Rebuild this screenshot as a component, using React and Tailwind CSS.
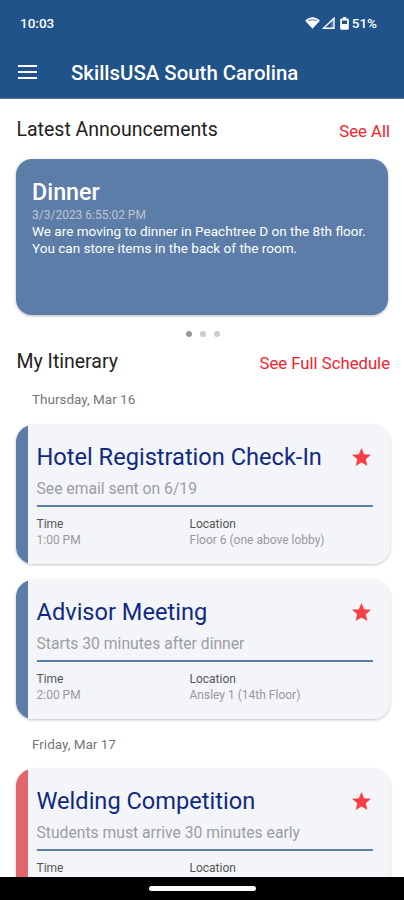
const days = [
  {
    label: 'Thursday, Mar 16',
    events: [
      { title: 'Hotel Registration Check-In', note: 'See email sent on 6/19', time: '1:00 PM', location: 'Floor 6 (one above lobby)', color: 'blue' },
      { title: 'Advisor Meeting', note: 'Starts 30 minutes after dinner', time: '2:00 PM', location: 'Ansley 1 (14th Floor)', color: 'blue' },
    ],
  },
  {
    label: 'Friday, Mar 17',
    events: [
      { title: 'Welding Competition', note: 'Students must arrive 30 minutes early', color: 'red' },
    ],
  },
]

function StatusBar() {
  return (
    <div className="h-[46px] pl-5 pr-[27px] flex items-center justify-between text-white font-medium text-[13.5px]">
      <span>10:03</span>
      <div className="flex items-center">
        <svg className="w-[15px] h-3" viewBox="0 0 15 12">
          <path d="M.2 3.800Q3.300.3 7.500.3T14.800 3.800L7.500 11.700Z" fill="#fff" />
          <path d="M3.200 3.600Q7.500 1.700 11.800 3.600" fill="none" stroke="#20538a" strokeWidth=".8" />
        </svg>
        <svg className="w-[13px] h-3 ml-0.5" viewBox="0 0 13 12">
          <path d="M1.500 11.200L12 1.200V11.200Z" fill="none" stroke="#fff" strokeWidth="1.400" />
          <path d="M9 4L12 1.200V11.200H9Z" fill="#fff" fillOpacity=".25" />
        </svg>
        <svg className="w-[9px] h-[13px] ml-[5px]" viewBox="0 0 9 13">
          <path d="M3 0h3v1.500h1.500q1.300 0 1.300 1.300v8.700q0 1.300-1.300 1.300h-6q-1.300 0-1.300-1.300V2.800q0-1.300 1.300-1.300H3Z" fill="#fff" />
          <path d="M2 3.500h5v3.500H2Z" fill="#20538a" />
        </svg>
        <span className="ml-[3px]">51%</span>
      </div>
    </div>
  )
}

function AppBar() {
  return (
    <div className="h-[53px] pl-[18px] flex items-center text-white">
      <button className="w-[19px] h-3.5 -mt-px flex flex-col justify-between" aria-label="Menu">
        <span className="w-full h-0.5 bg-white" />
        <span className="w-full h-0.5 bg-white" />
        <span className="w-full h-0.5 bg-white" />
      </button>
      <h1 className="ml-[34px] text-[20.4px] leading-6 font-medium whitespace-nowrap">SkillsUSA South Carolina</h1>
    </div>
  )
}

function SectionHeader({ title, action }) {
  return (
    <div className="flex justify-between pl-[16.5px] pr-3.5 h-7 leading-7 whitespace-nowrap">
      <h2 className="text-[19.5px] text-[#222]">{title}</h2>
      <button className="pt-0.5 text-[16.7px] text-[#f5222d]">{action}</button>
    </div>
  )
}

function Announcement() {
  return (
    <div className="mx-4 mt-[15px] h-[156px] rounded-2xl bg-[#5c7da8] px-4 pt-[19px] text-white shadow-[0_1px_3px_rgba(0,0,0,0.3)]">
      <h3 className="text-[23.3px] leading-7 font-medium">Dinner</h3>
      <p className="mt-0.5 text-[12px] leading-[14px] text-[#bfc5cd]">3/3/2023 6:55:02 PM</p>
      <p className="mt-px text-[13.55px] leading-[17px] whitespace-nowrap">
        We are moving to dinner in Peachtree D on the 8th floor.
        <br />
        You can store items in the back of the room.
      </p>
    </div>
  )
}

function Dots() {
  return (
    <div className="mt-4 pl-0.5 flex justify-center gap-2">
      <span className="w-1.5 h-1.5 rounded-full bg-[#999]" />
      <span className="w-1.5 h-1.5 rounded-full bg-[#ccc]" />
      <span className="w-1.5 h-1.5 rounded-full bg-[#ccc]" />
    </div>
  )
}

function Star() {
  return (
    <svg className="w-[19px] h-[18px]" viewBox="2 2 20 19" fill="#fb3f46">
      <path d="M12 17.270L18.180 21l-1.640-7.030L22 9.240l-7.190-.61L12 2 9.190 8.630 2 9.240l5.460 4.730L5.820 21z" />
    </svg>
  )
}

function EventCard({ e }) {
  const stripe = e.color === 'red' ? 'w-3 bg-[#e1666c]' : 'w-3 bg-[#5c7da8]'
  return (
    <div className="h-[139px] shrink-0 rounded-[17px] shadow-[0_1px_3px_rgba(0,0,0,0.25)]">
      <div className="h-full flex rounded-[17px] overflow-hidden bg-[#f3f5f9]">
        <div className={stripe} />
        <div className="flex-1 pl-[8.5px] pr-[17px] pt-4">
          <div className="flex justify-between items-center h-8 pr-0.5 whitespace-nowrap">
            <h3 className="text-[23.6px] leading-8 text-[#102a83]">{e.title}</h3>
            <Star />
          </div>
          <p className="mt-1.5 text-[15.7px] leading-5 text-[#9c9ea1]">{e.note}</p>
          <div className="mt-1.5 h-0.5 bg-[#5c7da8]" />
          <div className="mt-[9px] flex text-[12px] leading-4">
            <div className="w-[153px]">
              <p className="text-[#555]">Time</p>
              {e.time && <p className="text-[#999]">{e.time}</p>}
            </div>
            <div>
              <p className="text-[#555]">Location</p>
              {e.location && <p className="text-[#999]">{e.location}</p>}
            </div>
          </div>
        </div>
      </div>
    </div>
  )
}

export default function App() {
  return (
    <div className="w-[404px] h-[900px] flex flex-col overflow-hidden bg-white font-['Roboto',sans-serif]">
      <header className="h-[99px] shrink-0 bg-[#20538a] border-b border-[#55779f]">
        <StatusBar />
        <AppBar />
      </header>

      <main className="flex-1 min-h-0 overflow-hidden pt-[17px]">
        <SectionHeader title="Latest Announcements" action="See All" />
        <Announcement />
        <Dots />
        <div className="mt-[11px]">
          <SectionHeader title="My Itinerary" action="See Full Schedule" />
        </div>

        {days.map((day, i) => (
          <section key={day.label}>
            <p className={i === 0
              ? 'h-[49px] pt-[13px] pl-8 text-[13.5px] leading-5 text-[#777]'
              : 'h-[50px] pt-[15px] pl-8 text-[13.5px] leading-5 text-[#777]'
            }>
              {day.label}
            </p>
            <div className="flex flex-col gap-4 pl-4 pr-3.5">
              {day.events.map(e => (
                <EventCard key={e.title} e={e} />
              ))}
            </div>
          </section>
        ))}
      </main>

      <footer className="h-[23px] shrink-0 bg-black pt-[9px]">
        <div className="w-[107px] h-[5px] mx-auto rounded-full bg-white" />
      </footer>
    </div>
  )
}
